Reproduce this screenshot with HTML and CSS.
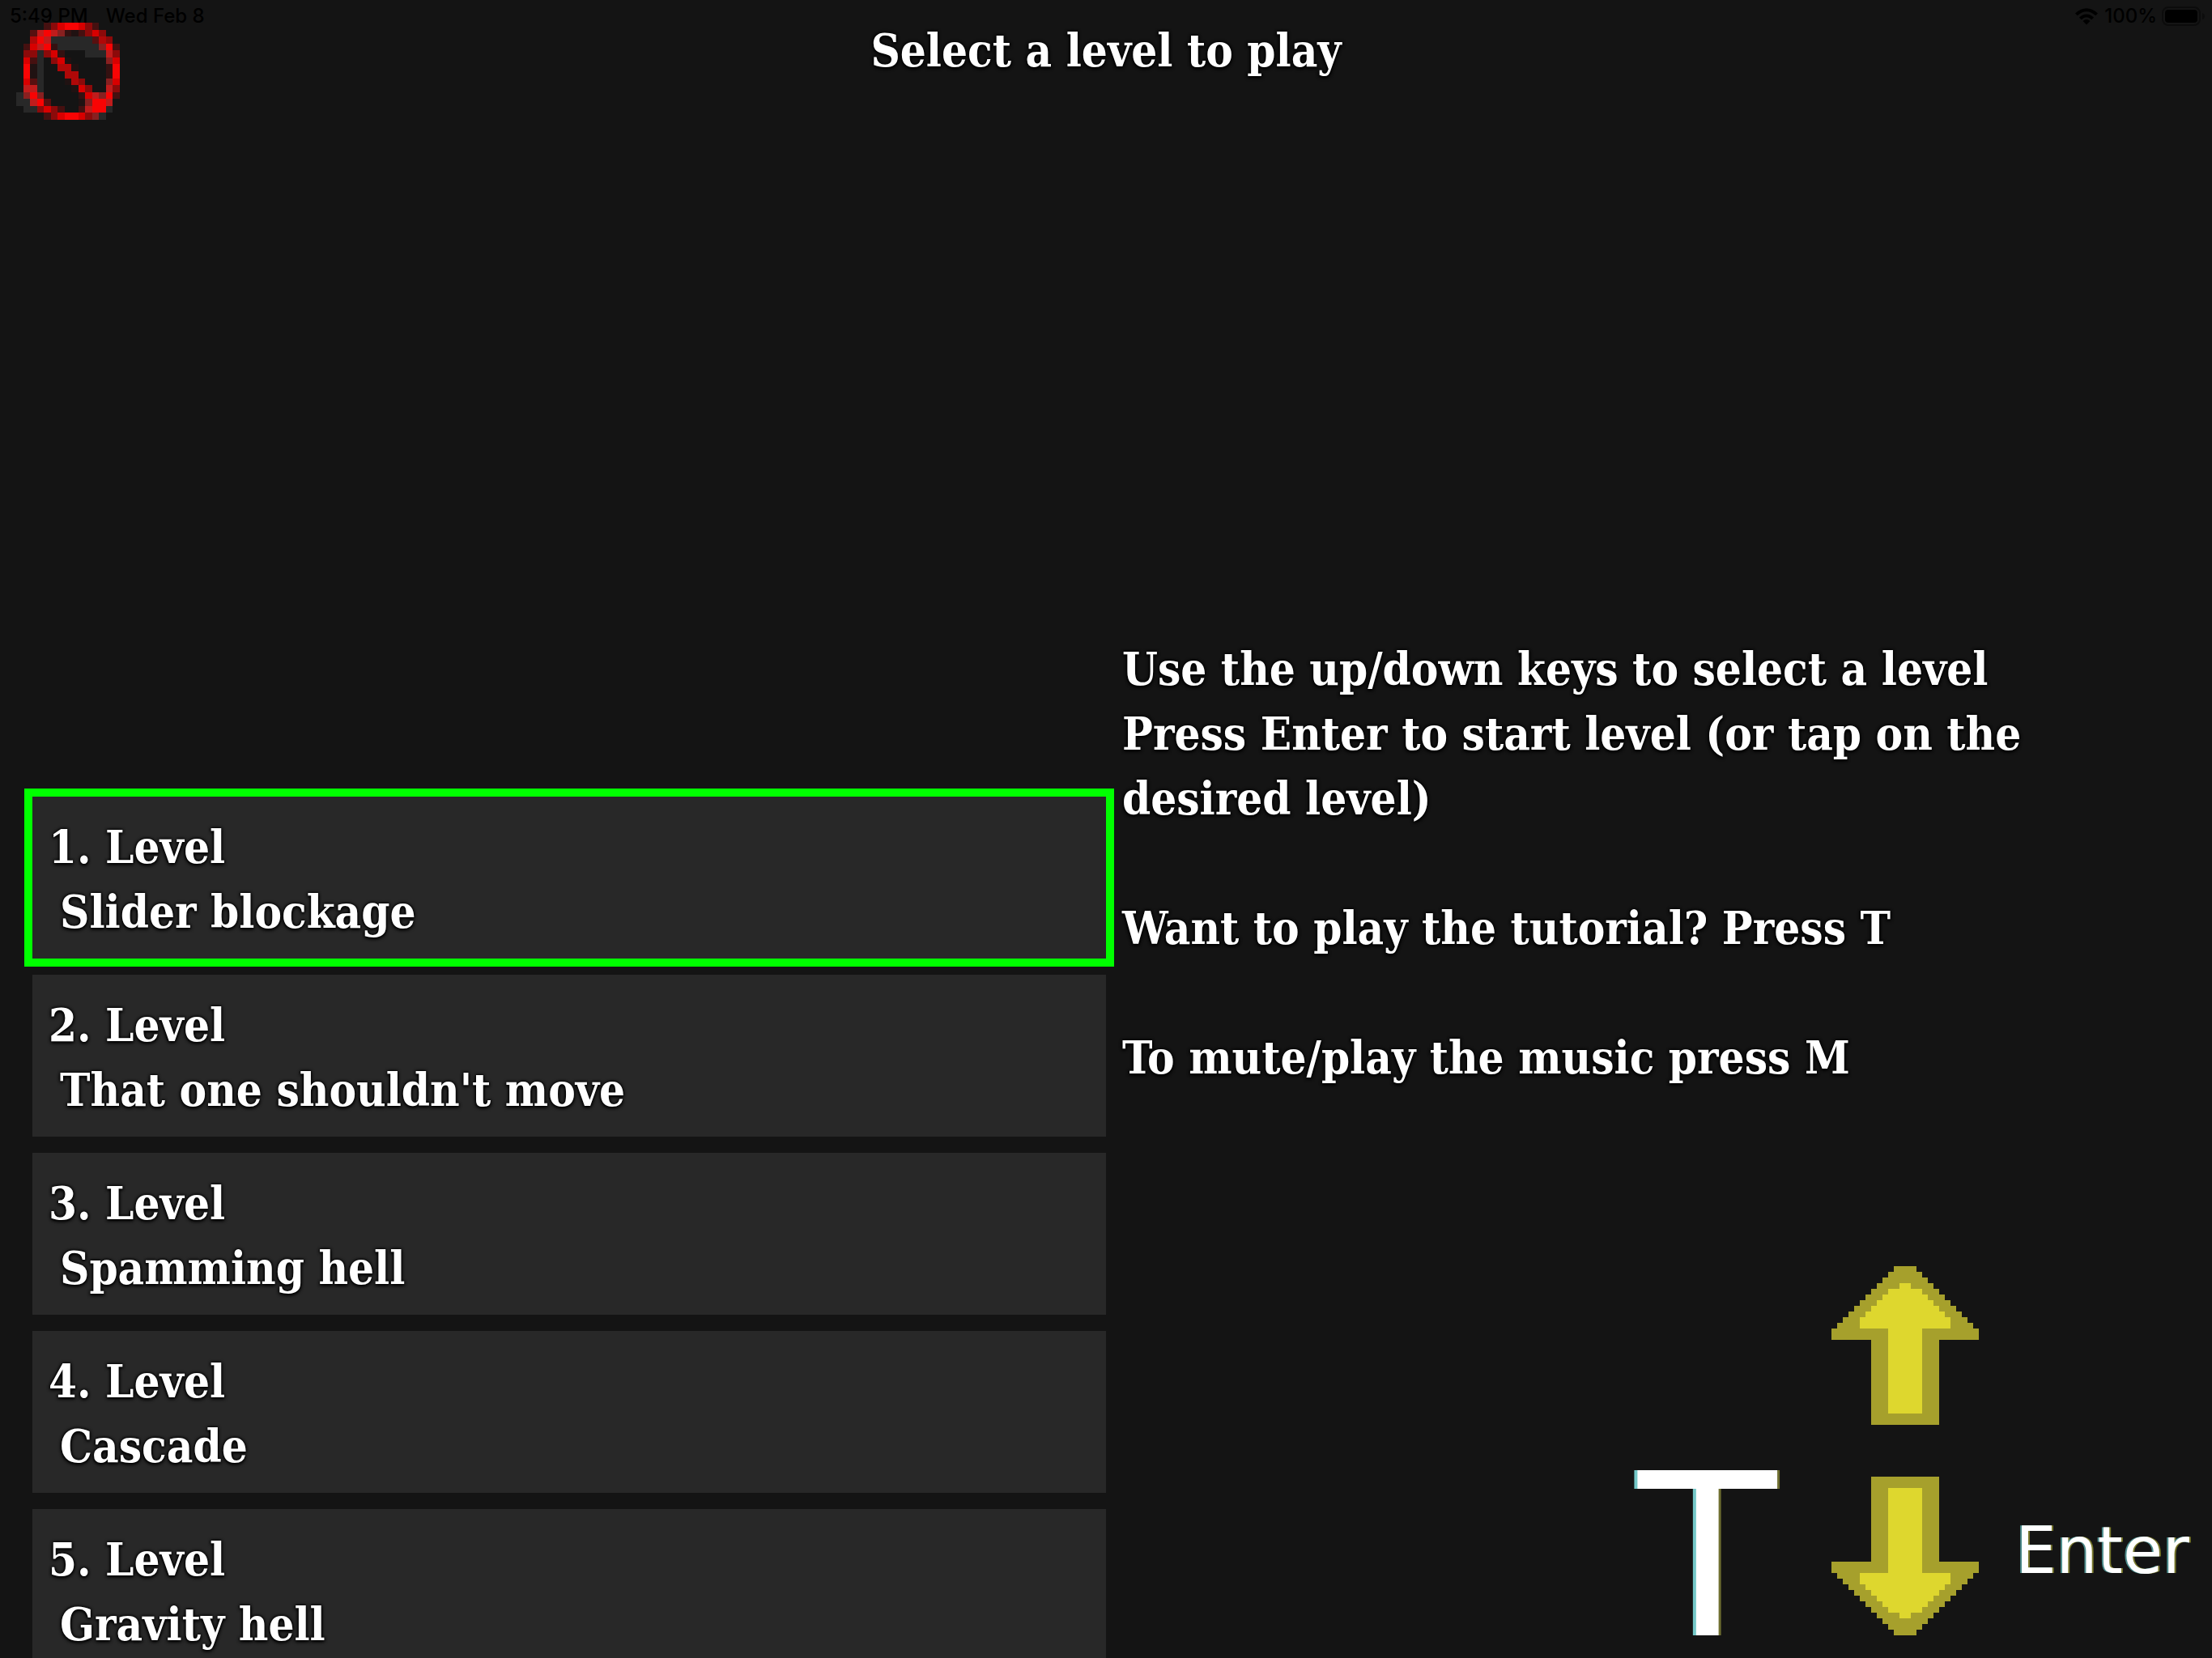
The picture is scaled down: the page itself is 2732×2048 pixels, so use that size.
FILE: index.html
```html
<!DOCTYPE html>
<html lang="en">
<head>
<meta charset="utf-8">
<meta name="viewport" content="width=device-width, initial-scale=1">
<title>Select a level to play</title>
<link rel="stylesheet" href="styles.css">
</head>
<body>
<div class="screen">
  <div class="status">
    <span class="status-time">5:49 PM</span>
    <span class="status-date">Wed Feb 8</span>
    <svg class="wifi" viewBox="0 0 28 21" aria-hidden="true">
      <path d="M0 6.500Q14-6 28 6.500L25.300 9.300Q14-1 2.700 9.300Z"/>
      <path d="M5 11.500Q14 3.500 23 11.500L20.300 14.200Q14 8.500 7.700 14.200Z"/>
      <path d="M9.500 16Q14 12 18.500 16L14 20.500Z"/>
    </svg>
    <span class="status-charge">100%</span>
    <svg class="battery" viewBox="0 0 54 24" aria-hidden="true">
      <rect class="battery-shell" x="1" y="1" width="46" height="22" rx="7"/>
      <rect x="4" y="4" width="40" height="16" rx="4"/>
      <path class="battery-tip" d="M50 8q3 1 3 4t-3 4z"/>
    </svg>
  </div>

  <header class="header">
    <button class="close" type="button" aria-label="Close">
      <svg class="close-icon" viewBox="0 -.5 15 14" shape-rendering="crispEdges" aria-hidden="true">
        <path stroke="#282828" d="M5 2h6M6 3h6M3 4h1M10 4h3M3 5h1M3 6h1M3 7h1M3 8h1M3 9h1M0 10h1M0 11h2M1 12h2M13 12h1M12 13h1"/>
        <path stroke="#201212" d="M8 1h1M7 5h1M2 6h1M8 6h1M2 7h1M7 8h1M8 9h1M9 11h1"/>
        <path stroke="#341111" d="M5 3h1M6 4h1M9 10h1M7 1h1M13 6h1M13 7h1"/>
        <path stroke="#451010" d="M4 0h1M11 0h1M9 1h1M1 3h1M14 3h1M2 5h1M14 10h1M6 12h1M9 12h1M4 13h1"/>
        <path stroke="#581010" d="M2 1h1M11 2h1M2 8h1M4 11h1"/>
        <path stroke="#8c0a0a" d="M5 0h1M10 0h1M10 1h1M12 1h1M13 2h1M1 4h2M4 4h1M14 4h1M5 5h1M9 8h1M10 9h1M14 9h1M3 12h1M5 12h1M5 13h1M10 13h1"/>
        <path stroke="#882020" d="M6 1h1M12 3h1M13 5h1M13 8h1M1 10h1M3 10h1M12 10h1M10 11h1M11 13h1"/>
        <path stroke="#b00808" d="M2 2h1M12 2h1M6 6h2M7 7h2M8 8h1"/>
        <path stroke="#c01c1c" d="M3 1h1M5 1h1M4 2h1M3 3h1M13 4h1M1 9h2M13 9h1M11 10h1M2 11h1M13 11h1M10 12h1"/>
        <path stroke="#d80000" d="M6 0h1M9 0h1M11 1h1M2 3h1M5 4h1M1 5h1M6 5h1M14 5h1M1 8h1M14 8h1M9 9h1M10 10h1M4 12h1M6 13h1M9 13h1"/>
        <path stroke="#f80404" d="M7 0h2M4 1h1M3 2h1M4 3h1M13 3h1M1 6h1M14 6h1M1 7h1M14 7h1M2 10h1M13 10h1M3 11h1M11 11h2M11 12h2M7 13h2"/>
      </svg>
    </button>
    <h1 class="title">Select a level to play</h1>
  </header>

  <main class="main">
    <nav class="levels" aria-label="Levels">
      <button class="level level-selected" type="button"><span>1. Level</span><span class="level-name">Slider blockage</span></button>
      <button class="level" type="button"><span>2. Level</span><span class="level-name">That one shouldn't move</span></button>
      <button class="level" type="button"><span>3. Level</span><span class="level-name">Spamming hell</span></button>
      <button class="level" type="button"><span>4. Level</span><span class="level-name">Cascade</span></button>
      <button class="level" type="button"><span>5. Level</span><span class="level-name">Gravity hell</span></button>
    </nav>

    <section class="side">
      <div class="help">
        <p>Use the up/down keys to select a level<br>Press Enter to start level (or tap on the<br>desired level)</p>
        <p>Want to play the tutorial? Press T</p>
        <p>To mute/play the music press M</p>
      </div>
      <div class="controls">
        <button class="key key-t" type="button">T</button>
        <div class="arrows">
          <button class="key" type="button" aria-label="Up">
            <svg class="arrow" viewBox="0 0 26 28" shape-rendering="crispEdges" aria-hidden="true">
              <path fill="#a6a02c" d="M11 0h4v1h1v1h1v1h1v1h1v1h1v1h1v1h1v1h1v1h1v1h1v1h1v2h-7v15h-12v-15h-7v-2h1v-1h1v-1h1v-1h1v-1h1v-1h1v-1h1v-1h1v-1h1v-1h1v-1h1z"/>
              <path fill="#ded72e" d="M12 3h2v1h2v1h1v1h1v1h1v1h1v1h1v2h-5v15h-6v-15h-5v-2h1v-1h1v-1h1v-1h1v-1h1v-1h2z"/>
            </svg>
          </button>
          <button class="key" type="button" aria-label="Down">
            <svg class="arrow arrow-down" viewBox="0 0 26 28" shape-rendering="crispEdges" aria-hidden="true">
              <path fill="#a6a02c" d="M11 0h4v1h1v1h1v1h1v1h1v1h1v1h1v1h1v1h1v1h1v1h1v1h1v2h-7v15h-12v-15h-7v-2h1v-1h1v-1h1v-1h1v-1h1v-1h1v-1h1v-1h1v-1h1v-1h1v-1h1z"/>
              <path fill="#ded72e" d="M12 3h2v1h2v1h1v1h1v1h1v1h1v1h1v2h-5v15h-6v-15h-5v-2h1v-1h1v-1h1v-1h1v-1h1v-1h2z"/>
            </svg>
          </button>
        </div>
        <button class="key key-enter" type="button">Enter</button>
      </div>
    </section>
  </main>
</div>
</body>
</html>
```
FILE: styles.css
```css
* {
  box-sizing: border-box;
}

body {
  margin: 0;
  background: #141414;
  color: #fff;
  font-family: "Roboto Slab", "DejaVu Serif Condensed", "DejaVu Serif", serif;
  font-size: 56px;
  font-weight: 700;
  line-height: 80px;
  text-shadow: 0 0 3px #000, 0 0 4px #000, 0 2px 4px #000;
}

button {
  margin: 0;
  padding: 0;
  border: 0;
  background: none;
  color: inherit;
  font: inherit;
  text-shadow: inherit;
  cursor: pointer;
}

p {
  margin: 0;
}

.screen {
  position: relative;
  display: flex;
  flex-direction: column;
  height: 100vh;
  overflow: hidden;
}

/* System status bar, drawn over the game */
.status {
  position: absolute;
  inset: 0 0 auto;
  z-index: 1;
  display: flex;
  align-items: center;
  height: 40px;
  padding: 0 8px 0 12px;
  color: #000;
  font: 500 24px/40px Inter, "Liberation Sans", sans-serif;
  text-shadow: none;
  pointer-events: none;
}

.status-date {
  margin: 0 auto 0 22px;
}

.wifi {
  width: 28px;
  height: 21px;
}

.status-charge {
  margin: 0 6px 0 8px;
}

.battery {
  width: 54px;
  height: 24px;
}

.battery-shell {
  fill: none;
  stroke: #0c0c0c;
  stroke-width: 2;
}

.battery-tip {
  fill: #0c0c0c;
}

.header {
  display: grid;
  grid-template-columns: 1fr auto 1fr;
  flex: none;
  height: 160px;
  padding: 22px 20px 0;
}

.close {
  justify-self: start;
  align-self: start;
  height: 120px;
  margin-top: 6px;
}

.close-icon {
  display: block;
  width: 128px;
  height: 120px;
}

.title {
  margin: 0;
  font-size: inherit;
}

.main {
  display: grid;
  grid-template: minmax(0, 1fr) / 1fr 1fr;
  flex: 1;
  min-height: 0;
}

.levels {
  display: flex;
  flex-direction: column;
  gap: 20px;
  padding: calc(50vh - 200px) 0 0 40px;
}

.level {
  display: flex;
  flex: none;
  flex-direction: column;
  padding: 22px 20px 18px;
  background: #282828;
  text-align: left;
}

.level-selected {
  outline: 10px solid #0f0;
}

.level-name {
  padding-left: 14px;
}

.side {
  display: flex;
  flex-direction: column;
  justify-content: space-between;
  min-height: 0;
  padding: calc(50vh - 398px) 28px 28px 20px;
}

.help {
  display: flex;
  flex-direction: column;
  gap: 80px;
}

.controls {
  display: flex;
  align-items: flex-end;
  justify-content: flex-end;
}

.arrows {
  display: flex;
  flex-direction: column;
  gap: 64px;
  margin: 0 45px 0 68px;
}

.arrow {
  display: block;
  width: 182px;
  height: 196px;
}

.arrow-down {
  transform: scaleY(-1);
}

.key-t,
.key-enter {
  font-family: "DejaVu Sans", sans-serif;
  font-weight: 400;
}

.key-t {
  font-size: 280px;
  line-height: 194px;
  text-shadow: -4px 0 #74c8c8, 3px 0 #6e6e30;
}

.key-enter {
  margin-bottom: 54px;
  font-size: 80px;
  line-height: 100px;
  text-shadow: -2px 0 #4c8c8c, 2px 0 #77772c;
}
```
